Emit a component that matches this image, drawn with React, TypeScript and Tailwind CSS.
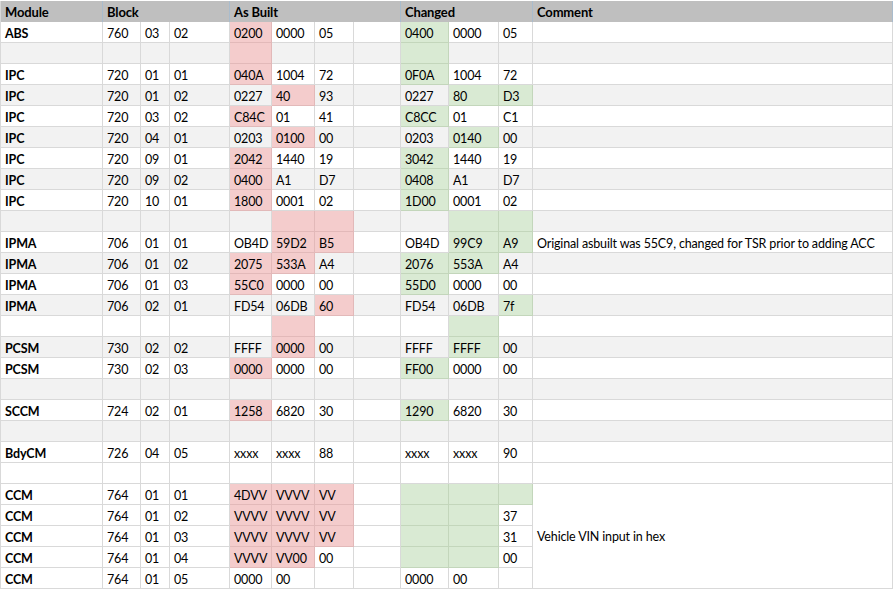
type Tone = "" | "p" | "g";

type Row = {
  module?: string;
  block?: [string, string, string];
  built?: [string, string, string];
  changed?: [string, string, string];
  builtTone?: [Tone, Tone, Tone];
  changedTone?: [Tone, Tone, Tone];
  comment?: string;
};

const rows: Row[] = [
  { module: "ABS", block: ["760", "03", "02"], built: ["0200", "0000", "05"], builtTone: ["p", "", ""], changed: ["0400", "0000", "05"], changedTone: ["g", "", ""] },
  { builtTone: ["p", "", ""], changedTone: ["g", "", ""] },
  { module: "IPC", block: ["720", "01", "01"], built: ["040A", "1004", "72"], builtTone: ["p", "", ""], changed: ["0F0A", "1004", "72"], changedTone: ["g", "", ""] },
  { module: "IPC", block: ["720", "01", "02"], built: ["0227", "40", "93"], builtTone: ["", "p", ""], changed: ["0227", "80", "D3"], changedTone: ["", "g", "g"] },
  { module: "IPC", block: ["720", "03", "02"], built: ["C84C", "01", "41"], builtTone: ["p", "", ""], changed: ["C8CC", "01", "C1"], changedTone: ["g", "", ""] },
  { module: "IPC", block: ["720", "04", "01"], built: ["0203", "0100", "00"], builtTone: ["", "p", ""], changed: ["0203", "0140", "00"], changedTone: ["", "g", ""] },
  { module: "IPC", block: ["720", "09", "01"], built: ["2042", "1440", "19"], builtTone: ["p", "", ""], changed: ["3042", "1440", "19"], changedTone: ["g", "", ""] },
  { module: "IPC", block: ["720", "09", "02"], built: ["0400", "A1", "D7"], builtTone: ["p", "", ""], changed: ["0408", "A1", "D7"], changedTone: ["g", "", ""] },
  { module: "IPC", block: ["720", "10", "01"], built: ["1800", "0001", "02"], builtTone: ["p", "", ""], changed: ["1D00", "0001", "02"], changedTone: ["g", "", ""] },
  { builtTone: ["", "p", "p"], changedTone: ["", "g", "g"] },
  { module: "IPMA", block: ["706", "01", "01"], built: ["OB4D", "59D2", "B5"], builtTone: ["", "p", "p"], changed: ["OB4D", "99C9", "A9"], changedTone: ["", "g", "g"], comment: "Original asbuilt was 55C9, changed for TSR prior to adding ACC" },
  { module: "IPMA", block: ["706", "01", "02"], built: ["2075", "533A", "A4"], builtTone: ["p", "p", ""], changed: ["2076", "553A", "A4"], changedTone: ["g", "g", ""] },
  { module: "IPMA", block: ["706", "01", "03"], built: ["55C0", "0000", "00"], builtTone: ["p", "", ""], changed: ["55D0", "0000", "00"], changedTone: ["g", "", ""] },
  { module: "IPMA", block: ["706", "02", "01"], built: ["FD54", "06DB", "60"], builtTone: ["", "", "p"], changed: ["FD54", "06DB", "7f"], changedTone: ["", "", "g"] },
  { builtTone: ["", "p", ""], changedTone: ["", "g", ""] },
  { module: "PCSM", block: ["730", "02", "02"], built: ["FFFF", "0000", "00"], builtTone: ["", "p", ""], changed: ["FFFF", "FFFF", "00"], changedTone: ["", "g", ""] },
  { module: "PCSM", block: ["730", "02", "03"], built: ["0000", "0000", "00"], builtTone: ["p", "", ""], changed: ["FF00", "0000", "00"], changedTone: ["g", "", ""] },
  {},
  { module: "SCCM", block: ["724", "02", "01"], built: ["1258", "6820", "30"], builtTone: ["p", "", ""], changed: ["1290", "6820", "30"], changedTone: ["g", "", ""] },
  {},
  { module: "BdyCM", block: ["726", "04", "05"], built: ["xxxx", "xxxx", "88"], changed: ["xxxx", "xxxx", "90"] },
  {},
  { module: "CCM", block: ["764", "01", "01"], built: ["4DVV", "VVVV", "VV"], builtTone: ["p", "p", "p"], changed: ["", "", ""], changedTone: ["g", "g", "g"] },
  { module: "CCM", block: ["764", "01", "02"], built: ["VVVV", "VVVV", "VV"], builtTone: ["p", "p", "p"], changed: ["", "", "37"], changedTone: ["g", "g", ""] },
  { module: "CCM", block: ["764", "01", "03"], built: ["VVVV", "VVVV", "VV"], builtTone: ["p", "p", "p"], changed: ["", "", "31"], changedTone: ["g", "g", ""] },
  { module: "CCM", block: ["764", "01", "04"], built: ["VVVV", "VV00", "00"], builtTone: ["p", "p", ""], changed: ["", "", "00"], changedTone: ["g", "g", ""] },
  { module: "CCM", block: ["764", "01", "05"], built: ["0000", "00", ""], changed: ["0000", "00", ""] },
];

function Cell({ text = "", tone = "", stripe, bold }: { text?: string; tone?: Tone; stripe: boolean; bold?: boolean }) {
  const bg =
    tone === "p"
      ? "bg-[#f4cccc] border-[#e2b9b9]"
      : tone === "g"
        ? "bg-[#d9ead3] border-[#c3d6bb]"
        : stripe
          ? "bg-[#f2f2f2] border-[#d9d9d9]"
          : "bg-white border-[#d9d9d9]";
  return (
    <div className={`h-[21px] border-r border-b pl-1 pt-[4px] whitespace-nowrap ${bg} ${bold ? "font-bold" : ""}`}>
      {text}
    </div>
  );
}

export default function App() {
  return (
    <div
      className="w-[895px] h-[592px] overflow-hidden bg-white pt-px text-[12.5px] leading-[16px] tracking-[-0.15px] text-black"
      style={{ fontFamily: "Lato, 'Open Sans', sans-serif" }}
    >
      <div className="grid grid-cols-[102px_38px_29px_60px_42px_43px_39px_47px_48px_50px_34px_360px] border-l border-[#d9d9d9] w-[892px]">
        {/* header */}
        <div className="h-[21px] bg-[#bfbfbf] border-r border-[#a9bccd] pl-1 pt-[3px] text-[13px] font-bold">Module</div>
        <div className="col-span-3 h-[21px] bg-[#bfbfbf] border-r border-[#a9bccd] pl-1 pt-[3px] text-[13px] font-bold">Block</div>
        <div className="col-span-4 h-[21px] bg-[#bfbfbf] border-r border-[#a9bccd] pl-1 pt-[3px] text-[13px] font-bold">As Built</div>
        <div className="col-span-3 h-[21px] bg-[#bfbfbf] border-r border-[#a9bccd] pl-1 pt-[3px] text-[13px] font-bold">Changed</div>
        <div className="h-[21px] bg-[#bfbfbf] border-r border-[#a9bccd] pl-1 pt-[3px] text-[13px] font-bold">Comment</div>

        {rows.map((r, i) => {
          const stripe = i % 2 === 1 && i < 21;
          const cells = [
            <Cell key="m" text={r.module} stripe={stripe} bold />,
            ...[0, 1, 2].map((k) => <Cell key={`b${k}`} text={r.block?.[k]} stripe={stripe} />),
            ...[0, 1, 2].map((k) => <Cell key={`a${k}`} text={r.built?.[k]} tone={r.builtTone?.[k]} stripe={stripe} />),
            <Cell key="gap" stripe={stripe} />,
            ...[0, 1, 2].map((k) => <Cell key={`c${k}`} text={r.changed?.[k]} tone={r.changedTone?.[k]} stripe={stripe} />),
          ];
          if (i < 22) cells.push(<Cell key="cm" text={r.comment} stripe={stripe} />);
          if (i === 22)
            cells.push(
              <div key="vin" className="row-span-5 border-r border-b border-[#d9d9d9] bg-white pl-1 pt-[2px] flex items-center">
                Vehicle VIN input in hex
              </div>
            );
          return cells;
        })}
      </div>
    </div>
  );
}
